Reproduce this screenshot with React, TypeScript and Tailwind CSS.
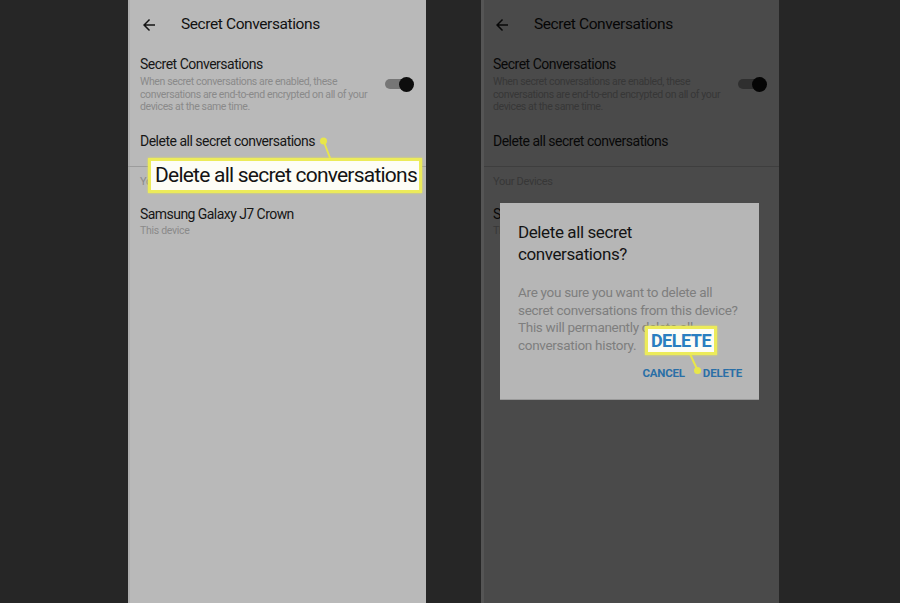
import React from "react";

const font = { fontFamily: "Roboto, 'Noto Sans', Arial, sans-serif" };

function BackArrow() {
  return (
    <svg width="18" height="18" viewBox="0 0 24 24">
      <path d="M20 11H7.83l5.59-5.59L12 4l-8 8 8 8 1.41-1.41L7.83 13H20v-2z" fill="#141414" />
    </svg>
  );
}

function Toggle() {
  return (
    <div className="relative w-[30px] h-[15px] shrink-0">
      <div className="absolute left-[1px] top-[2.5px] w-[22px] h-[10px] rounded-full bg-[#767676]" />
      <div className="absolute right-0 top-0 w-[15px] h-[15px] rounded-full bg-[#0d0d0d]" />
    </div>
  );
}

function Screen() {
  return (
    <div className="flex flex-col">
      <div className="flex items-center h-[50px] pt-[2px] pb-[2px] pl-[12px]">
        <BackArrow />
        <span className="ml-[23px] text-[15.5px] tracking-[-0.4px] text-[#111111]">Secret Conversations</span>
      </div>
      <div className="flex items-center pl-[12px] pr-[12px] pt-[5px]">
        <div className="flex-1">
          <div className="text-[14px] leading-[18px] tracking-[-0.5px] text-[#161616]">Secret Conversations</div>
          <div className="mt-[3px] text-[10.5px] leading-[12.5px] tracking-[-0.38px] text-[#8a8a8a] whitespace-nowrap">
            When secret conversations are enabled, these
            <br />
            conversations are end-to-end encrypted on all of your
            <br />
            devices at the same time.
          </div>
        </div>
        <Toggle />
      </div>
      <div className="mt-[18px] pl-[12px] text-[14px] leading-[18px] tracking-[-0.5px] text-[#161616]">
        Delete all secret conversations
      </div>
      <div className="mt-[16px] h-px bg-[#9c9c9c]" />
      <div className="mt-[8px] pl-[12px] text-[11px] leading-[14px] tracking-[-0.3px] text-[#8a8a8a]">Your Devices</div>
      <div className="mt-[16px] pl-[12px] text-[14px] leading-[18px] tracking-[-0.55px] text-[#161616]">
        Samsung Galaxy J7 Crown
      </div>
      <div className="mt-[2px] pl-[12px] text-[10.5px] leading-[12.5px] tracking-[-0.3px] text-[#8a8a8a]">This device</div>
    </div>
  );
}

export default function App() {
  return (
    <div className="w-[900px] h-[603px] bg-[#262626] flex overflow-hidden" style={font}>
      <div className="ml-[128px] w-[298px] h-full bg-[#b9b9b9] relative border-l-2 border-[#adadad]">
        <div className="-ml-[2px]">
          <Screen />
        </div>
        <svg className="absolute left-0 top-0" width="298" height="200" viewBox="0 0 298 200">
          <line x1="200" y1="158" x2="194" y2="142" stroke="#e8e64a" strokeWidth="2" />
          <circle cx="193.5" cy="141" r="3.5" fill="#e8e64a" />
        </svg>
        <div className="absolute left-[18px] top-[158px] w-[274px] h-[35px] bg-[#fdfdf6] border-[3px] border-[#eceb5a] flex items-center pl-[4px] shadow-[0_0_2px_#e8e64a]">
          <span className="text-[21px] leading-none tracking-[-0.77px] text-[#141414] whitespace-nowrap">
            Delete all secret conversations
          </span>
        </div>
      </div>
      <div className="ml-[55px] w-[298px] h-full bg-[#b9b9b9] relative">
        <Screen />
        <div className="absolute inset-0 bg-black/60 border-l-[3px] border-[#555555]" />
        <div className="absolute left-[19px] top-[203px] w-[259px] h-[197px] bg-[#b6b6b6] border-b border-[#9a9a9a] pl-[18px] pt-[18px]">
          <div className="text-[17px] leading-[22px] tracking-[-0.4px] text-[#141414]">
            Delete all secret
            <br />
            conversations?
          </div>
          <div className="mt-[19px] text-[13.5px] leading-[17.5px] tracking-[-0.3px] text-[#7e7e7e] whitespace-nowrap">
            Are you sure you want to delete all
            <br />
            secret conversations from this device?
            <br />
            This will permanently delete all
            <br />
            conversation history.
          </div>
          <div className="absolute right-[17px] top-[163px] flex gap-[18px] text-[11.5px] leading-[14px] font-bold text-[#2a6fa6] tracking-[-0.2px]">
            <span>CANCEL</span>
            <span>DELETE</span>
          </div>
        </div>
        <svg className="absolute left-0 top-0" width="298" height="400" viewBox="0 0 298 400">
          <line x1="209" y1="354" x2="216" y2="369" stroke="#e8e64a" strokeWidth="2" />
          <circle cx="216.5" cy="370.5" r="3.5" fill="#e8e64a" />
        </svg>
        <div className="absolute left-[164px] top-[326px] w-[72px] h-[29px] bg-[#fdfdf6] border-[3px] border-[#eceb5a] flex items-center justify-center shadow-[0_0_2px_#e8e64a]">
          <span className="text-[18px] leading-none font-bold tracking-[-0.5px] text-[#2a7fc0]">DELETE</span>
        </div>
      </div>
    </div>
  );
}
